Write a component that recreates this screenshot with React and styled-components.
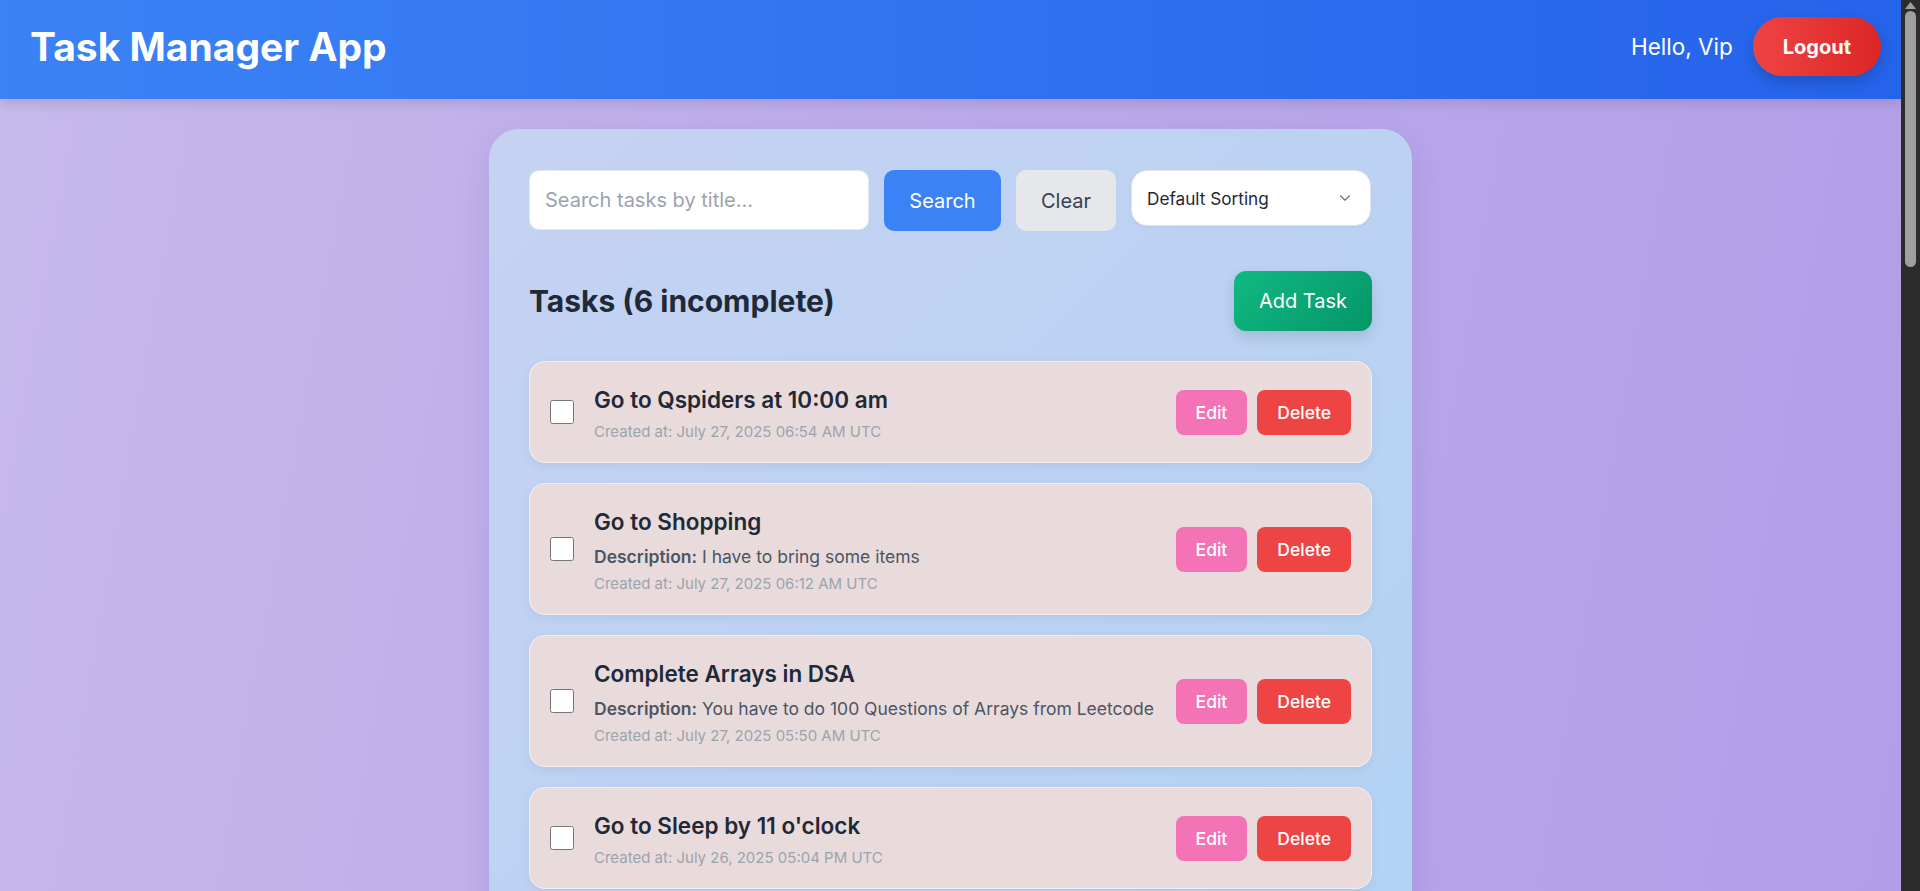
import React from 'react';
import styled, { createGlobalStyle } from 'styled-components';
import { ChevronDown } from 'lucide-react';

const GlobalStyle = createGlobalStyle`
  html, body {
    margin: 0;
    padding: 0;
  }
  body {
    font-family: Inter, "Noto Sans", sans-serif;
    background: linear-gradient(100deg, #c6b9eb 0%, #bba9ea 50%, #b29ee8 100%);
    background-attachment: fixed;
    min-height: 100vh;
    padding-right: 19px;
  }
  * { box-sizing: border-box; }
`;

// the browser's scroll bar, as it shows in the screenshot
const ScrollRail = styled.div`
  position: fixed;
  top: 0;
  right: 0;
  bottom: 0;
  width: 19px;
  background: #2c2c2c;
  z-index: 10;
`;

const ScrollArrow = styled.svg`
  position: absolute;
  top: 2px;
  left: 4px;
`;

const ScrollThumb = styled.div`
  position: absolute;
  top: 11px;
  left: 4px;
  width: 11px;
  height: 256px;
  border-radius: 6px;
  background: #9f9f9f;
`;

const Header = styled.header`
  display: flex;
  align-items: center;
  justify-content: space-between;
  padding: 17px 20px 23px 30px;
  background: linear-gradient(to right, #3b82f6, #2563eb);
  box-shadow: 0 4px 12px rgba(0, 0, 0, 0.12);
`;

const Brand = styled.h1`
  margin: 0;
  color: #fff;
  font-size: 39px;
  font-weight: 700;
  line-height: 48px;
`;

const UserArea = styled.div`
  display: flex;
  align-items: center;
  gap: 20px;
`;

const Greeting = styled.span`
  color: #fff;
  font-size: 22.5px;
`;

const LogoutButton = styled.button`
  height: 59px;
  padding: 0 30px;
  border: none;
  border-radius: 999px;
  background: linear-gradient(to right, #ef4444, #dc2626);
  color: #fff;
  font-family: inherit;
  font-size: 20px;
  font-weight: 700;
  box-shadow: 0 6px 14px rgba(0, 0, 0, 0.18);
  cursor: pointer;
`;

const Panel = styled.main`
  width: 923px;
  margin: 30px auto;
  padding: 41px 40px 40px;
  border-radius: 30px;
  background: linear-gradient(135deg, #c6d2f2 0%, #bbd2f2 50%, #b0d3f4 100%);
  box-shadow: 0 12px 30px rgba(60, 40, 120, 0.12);
`;

const SearchRow = styled.div`
  display: flex;
  align-items: flex-start;
  gap: 15px;
`;

const SearchInput = styled.input`
  width: 340px;
  height: 60px;
  padding: 0 15px;
  border: 1px solid #e5e7eb;
  border-radius: 10px;
  background: #fff;
  font-family: inherit;
  font-size: 20px;
  color: #1f2937;
  outline: none;
  &::placeholder { color: #9ca3af; }
`;

const tones = {
  blue: { bg: '#3b82f6', fg: '#fff', w: 117 },
  gray: { bg: '#e5e7eb', fg: '#374151', w: 100 },
};

const ToolButton = styled.button`
  width: ${(p) => tones[p.$tone].w}px;
  height: 61px;
  padding: 0;
  border: none;
  border-radius: 10px;
  background: ${(p) => tones[p.$tone].bg};
  color: ${(p) => tones[p.$tone].fg};
  font-family: inherit;
  font-size: 20px;
  cursor: pointer;
`;

const SelectWrap = styled.div`
  position: relative;
  width: 240px;
  height: 56px;
`;

const SortSelect = styled.select`
  appearance: none;
  width: 100%;
  height: 100%;
  padding: 0 40px 0 15px;
  border: 1px solid #e5e7eb;
  border-radius: 16px;
  background: #fff;
  font-family: inherit;
  font-size: 17.2px;
  color: #1f2937;
  box-shadow: 0 1px 3px rgba(0, 0, 0, 0.06);
`;

const Chevron = styled(ChevronDown)`
  position: absolute;
  right: 17px;
  top: 50%;
  transform: translateY(-50%);
  color: #6b7280;
  pointer-events: none;
`;

const HeadingRow = styled.div`
  display: flex;
  align-items: center;
  justify-content: space-between;
  margin-top: 40px;
`;

const Heading = styled.h2`
  margin: 0;
  font-size: 30px;
  font-weight: 700;
  color: #1f2937;
`;

const AddButton = styled.button`
  height: 60px;
  padding: 0 25px;
  border: none;
  border-radius: 12px;
  background: linear-gradient(135deg, #10b981, #059669);
  color: #fff;
  font-family: inherit;
  font-size: 20px;
  box-shadow: 0 6px 14px rgba(0, 0, 0, 0.12);
  cursor: pointer;
`;

const TaskList = styled.ul`
  list-style: none;
  margin: 30px 0 0;
  padding: 0;
  display: flex;
  flex-direction: column;
  gap: 20px;
`;

const TaskCard = styled.li`
  display: flex;
  align-items: center;
  gap: 20px;
  padding: 20px;
  border: 1px solid rgba(255, 255, 255, 0.5);
  border-radius: 16px;
  background: #e9dbdb;
  box-shadow: 0 3px 8px rgba(60, 60, 120, 0.08);
`;

const Check = styled.input`
  width: 24px;
  height: 24px;
  margin: 0;
  flex-shrink: 0;
`;

const TaskBody = styled.div`
  flex: 1;
  min-width: 0;
`;

const TaskTitle = styled.h3`
  margin: 0;
  font-size: 22.5px;
  line-height: 35px;
  font-weight: 600;
  color: #1f2937;
`;

const Description = styled.p`
  margin: 5px 0 0;
  font-size: 17.5px;
  line-height: 25px;
  color: #4b5563;
  strong { font-weight: 600; }
`;

const Created = styled.p`
  margin: 5px 0 0;
  font-size: 15px;
  line-height: 20px;
  color: #9ca3af;
`;

const CardActions = styled.div`
  display: flex;
  gap: 10px;
`;

const SmallButton = styled.button`
  padding: 10px 20px;
  border: none;
  border-radius: 8px;
  background: ${(p) => (p.$danger ? '#ef4444' : '#f472b6')};
  color: #fff;
  font-family: inherit;
  font-size: 17.5px;
  line-height: 25px;
  font-weight: 500;
  cursor: pointer;
`;

const tasks = [
  { title: 'Go to Qspiders at 10:00 am', created: 'July 27, 2025 06:54 AM UTC' },
  { title: 'Go to Shopping', description: 'I have to bring some items', created: 'July 27, 2025 06:12 AM UTC' },
  { title: 'Complete Arrays in DSA', description: 'You have to do 100 Questions of Arrays from Leetcode', created: 'July 27, 2025 05:50 AM UTC' },
  { title: "Go to Sleep by 11 o'clock", created: 'July 26, 2025 05:04 PM UTC' },
  { title: 'Revise React Hooks', created: 'July 26, 2025 02:30 PM UTC' },
  { title: 'Call Mom', created: 'July 26, 2025 10:15 AM UTC' },
];

export default function App() {
  return (
    <>
      <GlobalStyle />
      <ScrollRail>
        <ScrollArrow width="11" height="7" viewBox="0 0 11 7">
          <path d="M5.5 0 L11 7 L0 7 Z" fill="#9f9f9f" />
        </ScrollArrow>
        <ScrollThumb />
      </ScrollRail>
      <Header>
        <Brand>Task Manager App</Brand>
        <UserArea>
          <Greeting>Hello, Vip</Greeting>
          <LogoutButton>Logout</LogoutButton>
        </UserArea>
      </Header>
      <Panel>
        <SearchRow>
          <SearchInput placeholder="Search tasks by title..." />
          <ToolButton $tone="blue">Search</ToolButton>
          <ToolButton $tone="gray">Clear</ToolButton>
          <SelectWrap>
            <SortSelect defaultValue="default">
              <option value="default">Default Sorting</option>
              <option value="newest">Newest First</option>
              <option value="oldest">Oldest First</option>
            </SortSelect>
            <Chevron size={18} strokeWidth={1.5} />
          </SelectWrap>
        </SearchRow>
        <HeadingRow>
          <Heading>Tasks (6 incomplete)</Heading>
          <AddButton>Add Task</AddButton>
        </HeadingRow>
        <TaskList>
          {tasks.map((t) => (
            <TaskCard key={t.title}>
              <Check type="checkbox" />
              <TaskBody>
                <TaskTitle>{t.title}</TaskTitle>
                {t.description && (
                  <Description>
                    <strong>Description:</strong> {t.description}
                  </Description>
                )}
                <Created>Created at: {t.created}</Created>
              </TaskBody>
              <CardActions>
                <SmallButton>Edit</SmallButton>
                <SmallButton $danger>Delete</SmallButton>
              </CardActions>
            </TaskCard>
          ))}
        </TaskList>
      </Panel>
    </>
  );
}
